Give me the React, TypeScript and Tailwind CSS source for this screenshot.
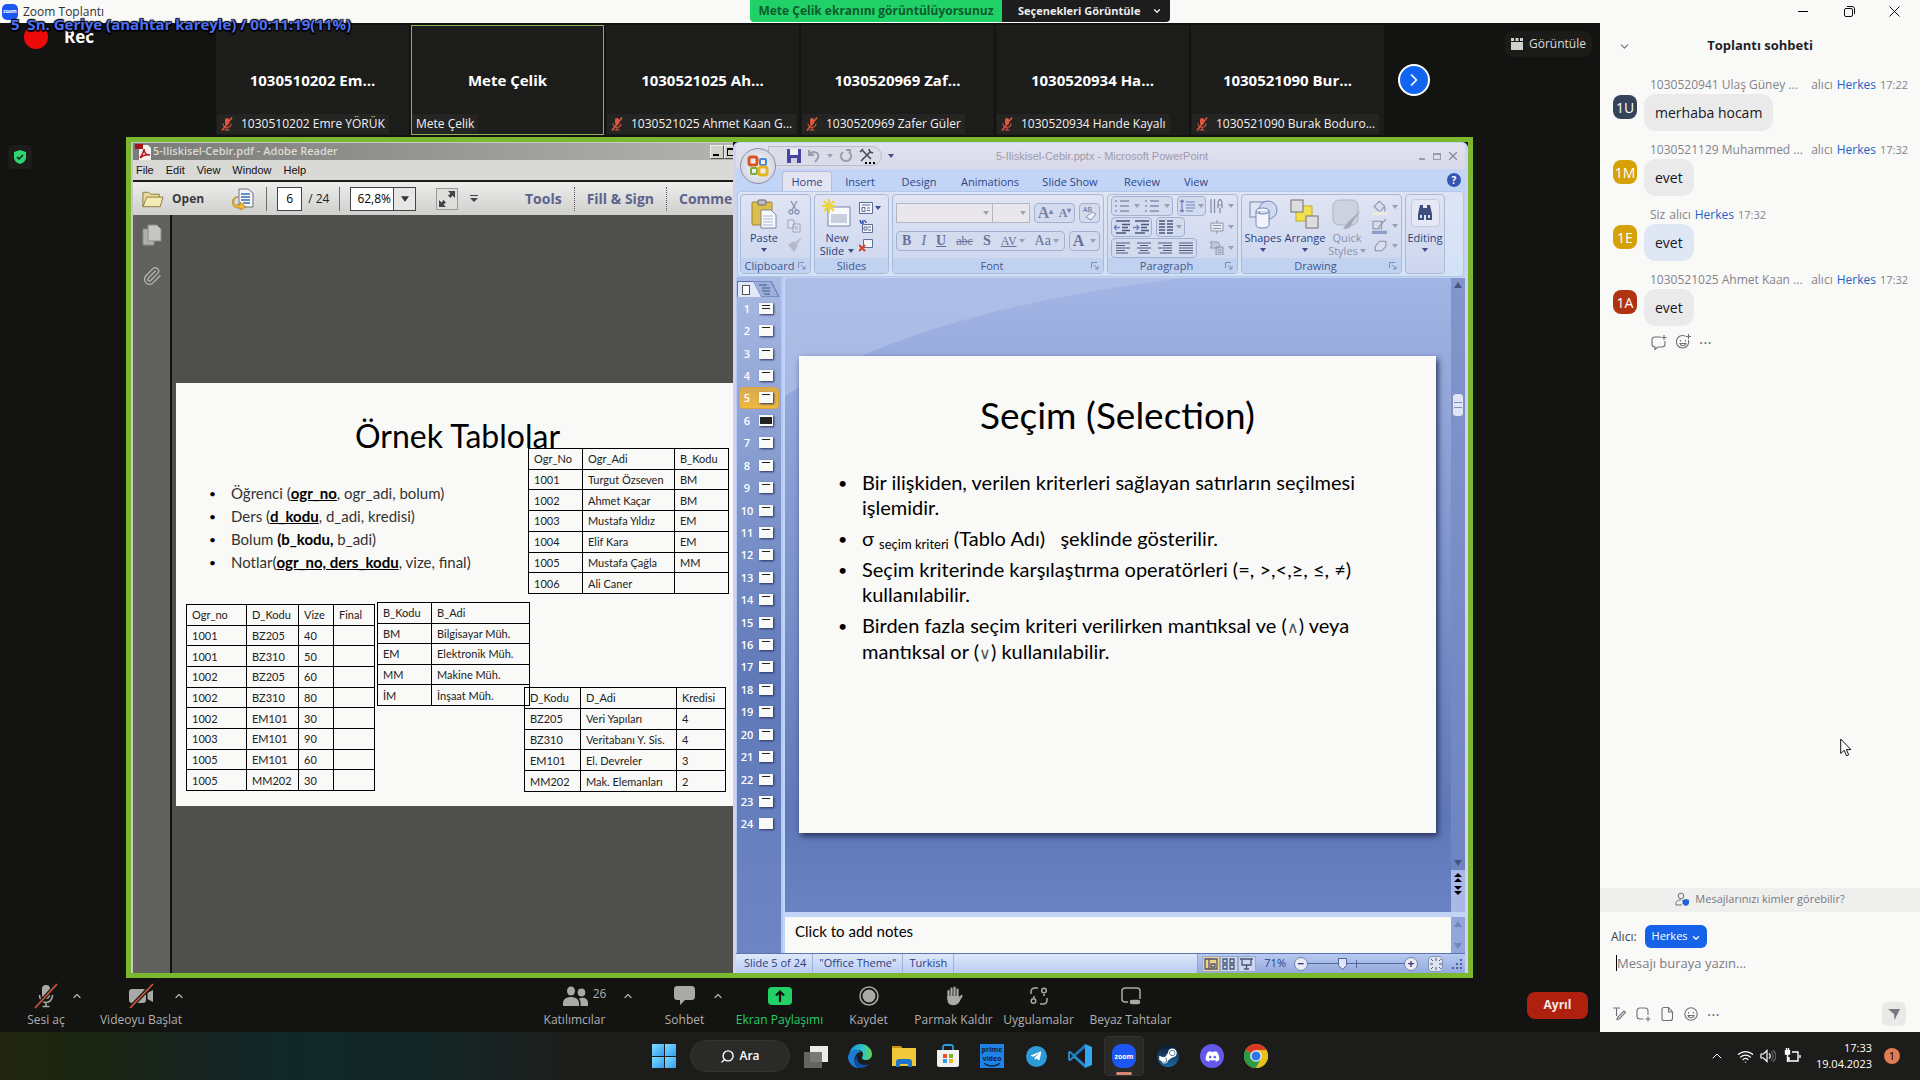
import React from "react";
import { ChevronDown, ChevronUp, ChevronRight, Search, Wifi, Paperclip } from "lucide-react";
import { FaDiscord, FaSteamSymbol, FaTelegramPlane } from "react-icons/fa";

const UI = "font-['Open_Sans','Noto_Sans',sans-serif]";
const SLIDE = "font-['Lato','Open_Sans',sans-serif]";

/* ---------- gallery ---------- */

function MutedMic({ className = "" }: { className?: string }) {
  return (
    <svg viewBox="0 0 12 14" className={"h-3.5 w-3 shrink-0 " + className} fill="none" stroke="#e0573f">
      <rect x="4" y="1" width="4" height="7" rx="2" fill="#e0573f" stroke="none" />
      <path d="M2 6.5c0 5 8 5 8 0M6 10.5V13M3.5 13h5" strokeWidth="1.1" />
      <path d="M11 .5 1 13.5" strokeWidth="1.6" />
    </svg>
  );
}

const people = [
  { big: "1030510202 Em...", small: "1030510202 Emre YÖRÜK", muted: true },
  { big: "Mete Çelik", small: "Mete Çelik", muted: false },
  { big: "1030521025 Ah...", small: "1030521025 Ahmet Kaan G...", muted: true },
  { big: "1030520969 Zaf...", small: "1030520969 Zafer Güler", muted: true },
  { big: "1030520934 Ha...", small: "1030520934 Hande Kayalı", muted: true },
  { big: "1030521090 Bur...", small: "1030521090 Burak Boduro...", muted: true },
];

function Gallery() {
  return (
    <div className="flex h-[114px] items-start pt-[2px]">
      <div className="w-[216px] shrink-0">
        <div className="flex items-center gap-4 pl-6 text-[17px] leading-6 font-bold text-white">
          <span className="h-6 w-6 rounded-full bg-[#ee0a0a]" />
          Rec
        </div>
      </div>
      <div className="flex gap-[2px]">
        {people.map((p) => (
          <div
            key={p.big}
            className={
              "flex h-[110px] w-[193px] flex-col border bg-[#1c1c1b] " +
              (p.muted ? "border-transparent" : "border-[#8fae55]")
            }
          >
            <div className="flex flex-1 items-end justify-center pb-[22px] text-[15px] leading-6 font-bold text-white">
              {p.big}
            </div>
            <div className="flex">
              <span className="flex h-5 items-center gap-1 bg-[#242423] px-1 text-[12px] whitespace-nowrap text-[#f1f1f1]">
                {p.muted && <MutedMic className="mr-1" />}
                {p.small}
              </span>
            </div>
          </div>
        ))}
      </div>
      <button
        aria-label="Sonraki katılımcılar"
        className="mt-[39px] ml-3.5 flex h-8 w-8 items-center justify-center rounded-full border-2 border-white bg-[#1265f0] text-white"
      >
        <ChevronRight size={20} strokeWidth={2} />
      </button>
      <button className="mt-[6px] mr-2 ml-auto flex h-[26px] items-center gap-1.5 rounded-lg bg-[#1b1b1a] px-1.5 text-[12px] text-[#dddddb]">
        <svg viewBox="0 0 12 12" className="h-3 w-3" fill="#cfcfcd">
          <path d="M0 0h3v3H0zM4.500 0h3v3h-3zM9 0h3v3H9zM0 4h12v8H0z" />
        </svg>
        Görüntüle
      </button>
    </div>
  );
}

/* ---------- Adobe Reader window ---------- */

function GridTable({ head, rows, cols, className }: { head: string[]; rows: string[][]; cols: string[]; className: string }) {
  return (
    <table
      className={
        "absolute table-fixed border-collapse text-[11px] leading-none text-[#222] " + className
      }
    >
      <colgroup>
        {cols.map((c, i) => (
          <col key={i} className={c} />
        ))}
      </colgroup>
      <tbody>
        <tr>
          {head.map((h) => (
            <th key={h} scope="col" className="border border-black py-0 pl-[5px] text-left font-normal whitespace-nowrap">
              {h}
            </th>
          ))}
        </tr>
        {rows.map((r, i) => (
          <tr key={i}>
            {r.map((c, j) => (
              <td key={j} className="border border-black py-0 pl-[5px] whitespace-nowrap">
                {c}
              </td>
            ))}
          </tr>
        ))}
      </tbody>
    </table>
  );
}

function PdfPage() {
  return (
    <div className={"relative ml-1 h-[423px] overflow-hidden bg-[#f9f9f7] text-black " + SLIDE}>
      <h2 className="absolute top-[33px] left-[179px] text-[32px] leading-10 whitespace-nowrap">Örnek Tablolar</h2>
      <ul className="absolute top-[99px] left-[33px] text-[15px] leading-[23px] whitespace-nowrap text-[#333]">
        {[
          <>Öğrenci (<b className="text-black underline">ogr_no</b>, ogr_adi, bolum)</>,
          <>Ders (<b className="text-black underline">d_kodu</b>, d_adi, kredisi)</>,
          <>Bolum <b className="text-black">(b_kodu,</b> b_adi)</>,
          <>Notlar(<b className="text-black underline">ogr_no, ders_kodu</b>, vize, final)</>,
        ].map((t, i) => (
          <li key={i} className="flex">
            <span className="w-[22px] text-[12px] text-black">•</span>
            <span>{t}</span>
          </li>
        ))}
      </ul>
      <GridTable
        className="top-[65px] left-[352px] h-[146px] w-[200px]"
        cols={["w-[54px]", "w-[92px]", "w-[54px]"]}
        head={["Ogr_No", "Ogr_Adi", "B_Kodu"]}
        rows={[
          ["1001", "Turgut Özseven", "BM"],
          ["1002", "Ahmet Kaçar", "BM"],
          ["1003", "Mustafa Yıldız", "EM"],
          ["1004", "Elif Kara", "EM"],
          ["1005", "Mustafa Çağla", "MM"],
          ["1006", "Ali Caner", ""],
        ]}
      />
      <GridTable
        className="top-[221px] left-[10px] h-[187px] w-[188px]"
        cols={["w-[60px]", "w-[52px]", "w-[35px]", "w-[41px]"]}
        head={["Ogr_no", "D_Kodu", "Vize", "Final"]}
        rows={[
          ["1001", "BZ205", "40", ""],
          ["1001", "BZ310", "50", ""],
          ["1002", "BZ205", "60", ""],
          ["1002", "BZ310", "80", ""],
          ["1002", "EM101", "30", ""],
          ["1003", "EM101", "90", ""],
          ["1005", "EM101", "60", ""],
          ["1005", "MM202", "30", ""],
        ]}
      />
      <GridTable
        className="top-[219px] left-[201px] h-[104px] w-[152px]"
        cols={["w-[54px]", "w-[98px]"]}
        head={["B_Kodu", "B_Adi"]}
        rows={[
          ["BM", "Bilgisayar Müh."],
          ["EM", "Elektronik Müh."],
          ["MM", "Makine Müh."],
          ["İM", "İnşaat Müh."],
        ]}
      />
      <GridTable
        className="top-[304px] left-[348px] h-[105px] w-[201px]"
        cols={["w-[56px]", "w-[96px]", "w-[49px]"]}
        head={["D_Kodu", "D_Adi", "Kredisi"]}
        rows={[
          ["BZ205", "Veri Yapıları", "4"],
          ["BZ310", "Veritabanı Y. Sis.", "4"],
          ["EM101", "El. Devreler", "3"],
          ["MM202", "Mak. Elemanları", "2"],
        ]}
      />
    </div>
  );
}

const Sep = () => <span className="h-6 w-px bg-[#6d6d6b]" />;

function AdobeReader() {
  return (
    <section className="flex w-[602px] shrink-0 flex-col overflow-hidden border-t border-l-2 border-[#c9c9c4] bg-[#d9d9d6]">
      <div className="flex h-[17px] items-center bg-linear-to-r from-[#7a7a78] to-[#b3b3b0] pl-0.5">
        <svg viewBox="0 0 16 16" className="mr-0.5 h-4 w-4">
          <path d="M4 1h9l3 3v12H4z" fill="#f4f0ee" />
          <path d="M0 0h8v5H0z" fill="#a51417" />
          <path d="M5 14c2-3 4-6 4-9 0 3 2 6 6 6-4-1-7 0-10 3z" fill="none" stroke="#b31217" strokeWidth="1.5" />
        </svg>
        <span className="text-[11px] font-semibold text-[#dcdad2]">5-Iliskisel-Cebir.pdf - Adobe Reader</span>
        <button aria-label="Minimize" className="ml-auto flex h-3.5 w-3.5 items-end justify-start border border-[#eee] border-r-[#555] border-b-[#555] bg-[#d4d1c9] p-0.5">
          <span className="h-0.5 w-1.5 bg-black" />
        </button>
        <button aria-label="Maximize" className="flex h-3.5 w-[9px] items-center border border-r-0 border-[#eee] border-b-[#555] bg-[#d4d1c9] pl-0.5">
          <span className="h-2 w-2 border border-t-2 border-r-0 border-black" />
        </button>
      </div>
      <nav className="flex h-5 items-center gap-3 pl-[3px] font-['Liberation_Sans',sans-serif] text-[11px] text-[#111]">
        {["File", "Edit", "View", "Window", "Help"].map((m) => (
          <button key={m}>{m}</button>
        ))}
      </nav>
      <div className="flex h-[35px] items-center border-t-2 border-[#1c1c1c] bg-linear-to-b from-[#ededec] to-[#cfcfcd] pl-2">
        <button className="flex items-center gap-2 text-[12px] font-bold text-[#3b3b3b]">
          <svg viewBox="0 0 24 20" className="h-5 w-[23px]">
            <path d="M2 18V3h6l2 2h9v3" fill="#e9dca0" stroke="#8b7a3c" />
            <path d="M2 18 6 8h17l-3 10z" fill="#f4ebb5" stroke="#8b7a3c" />
          </svg>
          Open
        </button>
        <span className="ml-4"><Sep /></span>
        <button aria-label="Convert" className="mx-3">
          <svg viewBox="0 0 22 22" className="h-[22px] w-[22px]">
            <path d="M7 1h9l5 4v14H7z" fill="#f3f5f8" stroke="#66727f" />
            <path d="M9 6h9M9 9h9M9 12h9M11 15h7" stroke="#3a70b0" strokeWidth="1.3" />
            <path d="M6 9C1 10 0 16 5 17h3v-3l6 5-6 3v-2H5C-2 19-1 8 6 9z" fill="#f0b93c" stroke="#a77812" strokeWidth=".7" />
          </svg>
        </button>
        <Sep />
        <input aria-label="Page" defaultValue="6" className="ml-2.5 h-6 w-[25px] border border-[#444] bg-white text-center text-[12px] text-black" />
        <span className="mr-2.5 ml-1.5 text-[12px] whitespace-nowrap text-[#222]">/ 24</span>
        <Sep />
        <span className="relative ml-2.5 flex h-6 w-[66px] border border-[#444] bg-white">
          <select aria-label="Zoom" className="w-full appearance-none bg-transparent pl-1.5 text-[12px] text-black">
            <option>62,8%</option>
          </select>
          <span className="pointer-events-none absolute inset-y-0 right-0 flex w-[22px] items-center justify-center border-l border-[#444] bg-[#e6e6e4]">
            <svg viewBox="0 0 6 4" className="h-1.5 w-2" fill="#333"><path d="M0 0h6L3 4z" /></svg>
          </span>
        </span>
        <span className="ml-2"><Sep /></span>
        <button aria-label="Fit" className="ml-3 flex h-[22px] w-[22px] items-center justify-center border border-[#9a9a98] bg-[#dededc]">
          <svg viewBox="0 0 18 18" className="h-[18px] w-[18px]" fill="#444">
            <path d="M10 1h7v7l-2.500-2.500L12.500 8 10 5.500l2.500-2zM8 17H1v-7l2.500 2.500L5.500 10 8 12.500l-2.500 2z" />
          </svg>
        </button>
        <button aria-label="More tools" className="ml-3">
          <svg viewBox="0 0 8 8" className="h-2 w-2" fill="#444"><path d="M0 0h8v1H0zM0 3h8L4 7z" /></svg>
        </button>
        <div className="ml-auto flex items-center text-[14px] font-bold text-[#5d638c]">
          <button className="pr-3">Tools</button>
          <span className="h-6 border-l border-dotted border-[#555]" />
          <button className="px-3 whitespace-nowrap">Fill &amp; Sign</button>
          <span className="h-6 border-l border-dotted border-[#555]" />
          <button className="w-[66px] overflow-hidden pl-3 text-left">Comment</button>
        </div>
      </div>
      <div className="flex flex-1">
        <div className="flex w-[39px] flex-col items-center gap-5 border-r-2 border-[#111] bg-[#60605e] pt-[9px]">
          <button aria-label="Pages">
            <svg viewBox="0 0 20 22" className="h-[22px] w-5" fill="#b0b0ae" stroke="#8a8a88">
              <path d="M1 5h11v16H1z" />
              <path d="M6 1h9l4 4v12H6z" fill="#c6c6c4" />
            </svg>
          </button>
          <button aria-label="Attachments" className="text-[#b8b8b6]">
            <Paperclip size={20} strokeWidth={1.500} />
          </button>
        </div>
        <div className="flex-1 overflow-hidden bg-[#4f4f4c] pt-[168px]">
          <PdfPage />
        </div>
      </div>
    </section>
  );
}

/* ---------- PowerPoint window ---------- */

const Caret = ({ dim = false }: { dim?: boolean }) => (
  <svg viewBox="0 0 6 4" className={"h-1 w-1.5 shrink-0 " + (dim ? "fill-[#9a9fb4]" : "fill-[#3b4f8a]")}>
    <path d="M0 0h6L3 4z" />
  </svg>
);

function Group({ label, className, children, launcher = true }: { label: string; className: string; children: React.ReactNode; launcher?: boolean }) {
  return (
    <div className={"flex h-20 flex-col overflow-hidden rounded border border-[#a9b9d8] bg-linear-to-b from-[#e0e4f3] to-[#ccd6ef] " + className}>
      <div className="flex flex-1">{children}</div>
      {label && (
        <div className="flex h-[15px] items-center justify-center bg-[#c0d2f0] text-[11px] leading-none text-[#44588f]">
          <span className="flex-1 text-center">{label}</span>
          {launcher && (
            <svg viewBox="0 0 8 8" className="mr-1 h-2 w-2" fill="none" stroke="#7d8cb5">
              <path d="M.5 6V.5H6M3 3l4 4M7 4v3H4" />
            </svg>
          )}
        </div>
      )}
    </div>
  );
}

const Lines = ({ d, color = "#4c587c" }: { d: string; color?: string }) => (
  <svg viewBox="0 0 14 14" className="h-3.5 w-3.5" stroke={color} strokeWidth="1.200">
    <path d={d} />
  </svg>
);

const ListIcon = () => (
  <svg viewBox="0 0 14 14" className="h-3.5 w-3.5" stroke="#8890b0" strokeWidth="1.3">
    <path d="M0 2h2M0 7h2M0 12h2M5 2h9M5 7h9M5 12h9" />
  </svg>
);

const IndentIcon = ({ flip = false }: { flip?: boolean }) => (
  <svg viewBox="0 0 16 14" className="h-3.5 w-4" stroke="#4c587c" strokeWidth="1.3" fill="none">
    <path d="M2 1h14M8 4.500h8M8 7.500h6M8 10.500h8M2 13h10" />
    <path d={flip ? "M0 7.500h6M3.500 5 6 7.500 3.500 10" : "M6 7.500H0M2.500 5 0 7.500 2.500 10"} stroke="#6c82c4" />
  </svg>
);

const boxed = "flex items-center justify-around rounded-sm border border-[#a3b1d0] bg-[#d3dbef]";

function Ribbon() {
  return (
    <div className="mx-px flex h-[86px] gap-[3px] rounded border border-[#b5c6e8] bg-linear-to-b from-[#dfe4f4] to-[#d2e2f6] px-[2px] pt-[2px] text-[11px] leading-3 text-[#2b3f80]">
      <Group label="Clipboard" className="w-[71px]">
        <button className="flex w-[46px] flex-col items-center pt-1">
          <svg viewBox="0 0 26 30" className="h-[30px] w-[26px]">
            <rect x="1" y="3" width="20" height="23" rx="1" fill="#dbbf4c" stroke="#9b8430" />
            <rect x="7" y="1" width="8" height="5" rx="1" fill="#b9bdc8" stroke="#666" />
            <path d="M10 11h10l5 5v13H10z" fill="#fafbfd" stroke="#7b87a6" />
            <path d="M12 17h10M12 20h10M12 23h10M12 26h10" stroke="#a4b3d3" />
          </svg>
          <span className="mt-[3px]">Paste</span>
          <span className="mt-1"><Caret /></span>
        </button>
        <div className="flex flex-col items-center justify-around py-1">
          <svg viewBox="0 0 12 14" className="h-3.5 w-3" fill="none" stroke="#8a93b8" strokeWidth="1.300">
            <path d="M3 0l5 9M9 0 4 9" />
            <circle cx="3" cy="11" r="2" />
            <circle cx="9" cy="11" r="2" />
          </svg>
          <svg viewBox="0 0 14 14" className="h-3.5 w-3.5" fill="#e3e6f0" stroke="#9aa2bf">
            <path d="M1 1h6v8H1zM6 5h7v8H6zM8 8h3M8 10h3" />
          </svg>
          <svg viewBox="0 0 14 14" className="h-3.5 w-3.5" fill="#b5b9c8">
            <path d="m9 4 4-4 1 1-4 5zM1 7l6-4 4 4-4 7z" />
          </svg>
        </div>
      </Group>
      <Group label="Slides" launcher={false} className="w-[75px]">
        <button className="flex w-11 flex-col items-center pt-1">
          <svg viewBox="0 0 30 30" className="h-[30px] w-[30px]">
            <rect x="6" y="8" width="22" height="19" fill="#f8f9fc" stroke="#7684ab" />
            <path d="M9 15h16v9H9z" fill="#c9cfdd" />
            <path d="M7 0v14M0 7h14M2 2l10 10M12 2 2 12" stroke="#ecd33c" strokeWidth="2" />
          </svg>
          <span className="mt-[3px]">New</span>
          <span className="mt-px flex items-center gap-1">Slide <Caret /></span>
        </button>
        <div className="flex flex-col items-start justify-around py-1">
          <span className="flex items-center gap-0.5">
            <svg viewBox="0 0 14 14" className="h-3.5 w-3.5" fill="#f4f6fb" stroke="#5f6c93">
              <path d="M.5 1.500h13v11H.5zM3 4h8M3 6.500h3v4H3zM8 7h3M8 9.500h3" />
            </svg>
            <Caret />
          </span>
          <svg viewBox="0 0 14 14" className="h-3.5 w-3.5" fill="#f4f6fb" stroke="#5f6c93">
            <path d="M3.500 5.500h10v8h-10zM5 8h3v3H5zM9 8h3M9 11h3" />
            <path d="M7 4C7 1 4 1 3 3M1 1l1 3h3" stroke="#2f52b5" strokeWidth="1.400" fill="none" />
          </svg>
          <svg viewBox="0 0 14 14" className="h-3.5 w-3.5" fill="#f4f6fb" stroke="#5f6c93">
            <path d="M4.500 1.500h9v8h-9z" />
            <path d="m0 7 6 6M6 7l-6 6" stroke="#d2421f" strokeWidth="2" />
          </svg>
        </div>
      </Group>
      <Group label="Font" className="w-[212px]">
        <div className="flex flex-1 flex-col gap-2 px-[3px] pt-2 text-[#7782a5]">
          <div className="flex h-5 gap-1">
            <div className="flex">
              <span className="relative flex">
                <select aria-label="Font" className="w-[97px] appearance-none border border-[#b3b6c4] bg-[#e9e7ec]" />
                <span className="pointer-events-none absolute top-[8px] right-1 flex"><Caret dim /></span>
              </span>
              <span className="relative flex">
                <select aria-label="Font size" className="w-[37px] appearance-none border border-l-0 border-[#b3b6c4] bg-[#e9e7ec]" />
                <span className="pointer-events-none absolute top-[8px] right-1 flex"><Caret dim /></span>
              </span>
            </div>
            <div className={boxed + " w-[41px] font-['Liberation_Serif',serif] font-bold"}>
              <span className="text-[16px]">A<sup className="text-[8px]">▴</sup></span>
              <span className="text-[12px]">A<sup className="text-[8px]">▾</sup></span>
            </div>
            <div className={boxed + " flex-1"}>
              <svg viewBox="0 0 16 16" className="h-4 w-4" fill="#eceef5" stroke="#8a92ae">
                <text x="1" y="7" fontSize="7" fill="#5c678c" stroke="none">AB</text>
                <path d="m4 12 6-5 4 2-5 6z" />
              </svg>
            </div>
          </div>
          <div className="flex h-5 gap-1 font-['Liberation_Serif',serif] text-[14px] leading-4 text-[#66719a]">
            <div className={boxed + " w-[169px]"}>
              <b>B</b>
              <i>I</i>
              <u className="font-bold">U</u>
              <s className="text-[12px]">abc</s>
              <b>S</b>
              <span className="flex items-center gap-0.5 text-[12px] underline">AV <Caret dim /></span>
              <span className="flex items-center gap-0.5">Aa <Caret dim /></span>
            </div>
            <div className={boxed + " flex-1"}>
              <b className="text-[16px]">A</b>
              <Caret dim />
            </div>
          </div>
        </div>
      </Group>
      <Group label="Paragraph" className="w-[131px]">
        <div className="flex flex-1 justify-between px-[3px] pt-px">
          <div className="flex flex-col gap-px">
            <div className="flex h-5 gap-1">
              <div className={boxed + " w-[62px]"}><ListIcon /><Caret dim /><ListIcon /><Caret dim /></div>
              <div className={boxed + " w-[29px]"}>
                <svg viewBox="0 0 16 14" className="h-3.5 w-4" fill="none" stroke="#6d7fb8" strokeWidth="1.200">
                  <path d="M3 1v12M1 3l2-2 2 2M1 11l2 2 2-2M7 3h9M7 6h9M7 9h9M7 12h7" />
                </svg>
                <Caret dim />
              </div>
            </div>
            <div className="flex h-5 gap-1">
              <div className={boxed + " w-[41px]"}><IndentIcon /><IndentIcon flip /></div>
              <div className={boxed + " w-[29px]"}>
                <svg viewBox="0 0 14 14" className="h-3.5 w-3.5" stroke="#4c587c" strokeWidth="1.300">
                  <path d="M0 1h6M0 4h6M0 7h6M0 10h6M0 13h6M8 1h6M8 4h6M8 7h6M8 10h6M8 13h6" />
                </svg>
                <Caret dim />
              </div>
            </div>
            <div className="flex h-5">
              <div className={boxed + " w-[86px]"}>
                <Lines d="M0 2h14M0 4.500h9M0 7h14M0 9.500h9M0 12h12" />
                <Lines d="M0 2h14M3 4.500h8M0 7h14M3 9.500h8M1 12h12" />
                <Lines d="M0 2h14M5 4.500h9M0 7h14M5 9.500h9M2 12h12" />
                <Lines d="M0 2h14M0 4.500h14M0 7h14M0 9.500h14M0 12h14" />
              </div>
            </div>
          </div>
          <div className="flex flex-col justify-around">
            <span className="flex items-center gap-1">
              <svg viewBox="0 0 14 14" className="h-3.5 w-3.5" fill="none" stroke="#8089a6" strokeWidth="1.200">
                <path d="M1 0v14M4.500 0v14M8 9V3l2-3 2 3v6M8 6h4M10 9v5" />
              </svg>
              <Caret dim />
            </span>
            <span className="flex items-center gap-1">
              <svg viewBox="0 0 14 14" className="h-3.5 w-3.5" fill="#e9ebf3" stroke="#8f96af">
                <path d="M1 3h12v8H1zM3 5.500h8M3 8.500h8M7 0v3M7 11v3" />
              </svg>
              <Caret dim />
            </span>
            <span className="flex items-center gap-1">
              <svg viewBox="0 0 14 14" className="h-3.5 w-3.5" fill="#c5c9d6" stroke="#8f96af">
                <path d="M0 1h8l2 3-2 3H0l2-3zM6 6h7v8H6zM8 9h3M8 11.500h3" />
              </svg>
              <Caret dim />
            </span>
          </div>
        </div>
      </Group>
      <Group label="Drawing" className="w-[161px]">
        <button className="flex w-[42px] flex-col items-center pt-1">
          <svg viewBox="0 0 30 30" className="h-[30px] w-[30px]" fill="#f1f4fb" stroke="#7387b9">
            <rect x="2" y="3" width="17" height="15" fill="#dfe5f3" />
            <circle cx="20" cy="11" r="9" fill="#cfd9ef" />
            <path d="M8 12c0-4 13-4 13 0v14c0 4-13 4-13 0zM8 12c0 4 13 4 13 0" />
          </svg>
          <span className="mt-[3px]">Shapes</span>
          <span className="mt-1"><Caret /></span>
        </button>
        <button className="flex w-[42px] flex-col items-center pt-1">
          <svg viewBox="0 0 30 30" className="h-[30px] w-[30px]" stroke="#6f7173">
            <rect x="6" y="7" width="16" height="15" fill="#f0e04e" stroke="#bfae2c" />
            <rect x="1" y="1" width="12" height="12" fill="#dddde0" />
            <rect x="16" y="17" width="12" height="12" fill="#dddde0" />
          </svg>
          <span className="mt-[3px]">Arrange</span>
          <span className="mt-1"><Caret /></span>
        </button>
        <button className="flex w-[42px] flex-col items-center pt-1 text-[#8d93a8]">
          <svg viewBox="0 0 30 30" className="h-[30px] w-[30px]">
            <rect x="1" y="1" width="25" height="25" rx="6" fill="#ccd2e0" stroke="#adb5c9" />
            <path d="M29 11 17 22l-6 8c5 0 9-2 9-6z" fill="#a5abbd" />
          </svg>
          <span className="mt-[3px]">Quick</span>
          <span className="mt-px flex items-center gap-0.5">Styles <Caret dim /></span>
        </button>
        <div className="flex flex-1 flex-col items-center justify-around py-0.5">
          {["m2 7 5-5 5 5-5 5zM12 8v5", "M1 3h8v7H1zM13 1 6 9", "m3 8 4-5h6v5l-4 4H3z"].map((d, i) => (
            <span key={d} className="flex items-center gap-1">
              <svg viewBox="0 0 15 15" className="h-4 w-4" fill="#dadeea" stroke="#8b92ab">
                <path d={d} />
                {i < 2 && <path d="M0 13.500h14" stroke={i ? "#8d9cc8" : "#eeeae0"} strokeWidth="3" />}
              </svg>
              <Caret dim />
            </span>
          ))}
        </div>
      </Group>
      <Group label="" className="w-[40px]">
        <button className="flex w-full flex-col items-center pt-1">
          <span className="flex h-7 w-[29px] items-center justify-center rounded border border-[#c3cbe0] bg-[#e6e9f5]">
            <svg viewBox="0 0 16 16" className="h-4 w-4" fill="#3d4d80">
              <path d="M3 0h3v3h4V0h3l2 9v6H9v-5H7v5H1V9z" />
              <path d="M3 10h2v3H3zM11 10h2v3h-2z" fill="#dfe4f4" />
            </svg>
          </span>
          <span className="mt-[5px]">Editing</span>
          <span className="mt-1"><Caret /></span>
        </button>
      </Group>
    </div>
  );
}

function ThumbList() {
  return (
    <div className="flex w-[47px] shrink-0 flex-col border-r-2 border-l border-[#b7c9f3] bg-linear-to-b from-[#a9bae3] via-[#5f79b8] via-60% to-[#6d85c4]">
      <div className="flex h-5 items-end">
        <button aria-label="Slides" className="flex h-4 w-4 items-center justify-center border-t border-l border-[#5a6fa8] bg-[#dfe7f8]">
          <span className="h-2.5 w-2 border border-[#555] bg-white" />
        </button>
        <svg viewBox="0 0 26 16" className="h-4 w-[26px]">
          <path d="M0 0 8 16h18L18 0z" fill="#9db0dd" stroke="#5a6fa8" />
          <path d="M0 0v16h8z" fill="#dfe7f8" />
          <path d="M6 4h8M9 7h8M9 10h8M11 13h6" stroke="#46547f" />
        </svg>
      </div>
      <ol className="flex h-[538px] flex-col">
        {Array.from({ length: 24 }, (_, i) => (
          <li
            key={i}
            className={
              "mx-[2px] flex flex-1 items-center rounded-sm border text-[11px] leading-none font-semibold text-white " +
              (i === 4 ? "border-[#dca23c] bg-linear-to-b from-[#d8ab50] to-[#f0b83e]" : "border-transparent")
            }
          >
            <span className="w-3.5 text-center">{i + 1}</span>
            <span className="ml-[5px] flex h-[11px] w-3.5 justify-center bg-[#f9f9f7] pt-0.5 shadow-[1px_1px_2px_#26315a]">
              {i < 23 && <span className={i === 5 ? "h-[7px] w-3 bg-[#222]" : i === 0 ? "h-1 w-2 border-y border-[#222]" : "h-px w-2 bg-[#222]"} />}
            </span>
          </li>
        ))}
      </ol>
    </div>
  );
}

function SlideContent() {
  return (
    <div className={"mt-[78px] ml-[14px] h-[477px] w-[637px] bg-[#f9f9f7] pt-[35px] text-black shadow-[2px_3px_6px_#26315a] " + SLIDE}>
      <h1 className="text-center text-[37px] leading-[48px]">Seçim (Selection)</h1>
      <ul className="mt-[31px] ml-[39px] flex flex-col gap-[6px] text-[20px] leading-[25px] whitespace-nowrap">
        {[
          <>Bir ilişkiden, verilen kriterleri sağlayan satırların seçilmesi<br />işlemidir.</>,
          <>σ <sub className="text-[13px] leading-none">seçim kriteri</sub> (Tablo Adı)&nbsp;&nbsp; şeklinde gösterilir.</>,
          <>Seçim kriterinde karşılaştırma operatörleri (=, &gt;,&lt;,≥, ≤, ≠)<br />kullanılabilir.</>,
          <>Birden fazla seçim kriteri verilirken mantıksal ve (<span className="text-[16px] text-[#555]">∧</span>) veya<br />mantıksal or (<span className="text-[16px] text-[#555]">∨</span>) kullanılabilir.</>,
        ].map((t, i) => (
          <li key={i} className="flex">
            <span className="w-6 text-[16px]">•</span>
            <span>{t}</span>
          </li>
        ))}
      </ul>
    </div>
  );
}

function StatusBar() {
  const cell = "flex h-full items-center border-r border-[#9db3dc] px-1.5";
  return (
    <div className="flex h-5 items-center border-t border-[#5c76b4] bg-linear-to-b from-[#dfe8fa] to-[#b9ccf2] pl-[2px] text-[11px] text-[#2b3f80]">
      <span className={cell}>Slide 5 of 24</span>
      <span className={cell}>&quot;Office Theme&quot;</span>
      <span className={cell}>Turkish</span>
      <div className="ml-auto flex h-full items-center border-l border-[#8ba2d4] bg-linear-to-b from-[#b9caf0] to-[#93aadf] pl-1">
        <div className="flex h-4 text-[#4a5575]">
          {["M1 1h12v10H1zM5 1v10M7 6h4v3H7z", "M1 1h4v4H1zM8 1h4v4H8zM1 7h4v4H1zM8 7h4v4H8z", "M0 1h13M2 1v6h9V1M6.500 7v4M4 11h5"].map((d, i) => (
            <button key={d} aria-label={"View " + (i + 1)} className={"flex w-[18px] items-center justify-center border border-[#9aa9cc] " + (i === 0 ? "bg-[#f2d28a]" : "bg-[#ccd6ee]")}>
              <svg viewBox="0 0 14 12" className="h-3 w-3.5" fill="none" stroke="currentColor" strokeWidth="1.300"><path d={d} /></svg>
            </button>
          ))}
        </div>
        <span className="mr-2 ml-2">71%</span>
        <button aria-label="Zoom out" className="flex h-3.5 w-3.5 items-center justify-center rounded-full border border-[#6f7fa9] bg-[#e8ecf7] text-[12px] leading-none font-bold">−</button>
        <span className="relative flex h-3 w-24 items-center">
          <span className="h-px w-full bg-[#55659a]" />
          <svg viewBox="0 0 9 12" className="absolute left-[30px] h-3 w-[9px]" fill="#dfe5f5" stroke="#55659a"><path d="M.5.5h8v7l-4 4-4-4z" /></svg>
          <span className="absolute left-[48px] h-2 w-px bg-[#55659a]" />
        </span>
        <button aria-label="Zoom in" className="flex h-3.5 w-3.5 items-center justify-center rounded-full border border-[#6f7fa9] bg-[#e8ecf7] text-[12px] leading-none font-bold">+</button>
        <button aria-label="Fit slide" className="ml-2.5 flex h-4 w-[15px] items-center justify-center rounded-sm border border-[#8793b5] bg-[#dfe4f2]">
          <svg viewBox="0 0 12 12" className="h-3 w-3" fill="none" stroke="#4a5575"><path d="M6 0v3M6 9v3M0 6h3M9 6h3M1 1l2 2M11 1 9 3M1 11l2-2M11 11 9 9" /></svg>
        </button>
        <svg viewBox="0 0 12 12" className="mr-0.5 ml-2 h-3 w-3" fill="#4d5f9b">
          <path d="M9 1h2v2H9zM9 5h2v2H9zM9 9h2v2H9zM5 5h2v2H5zM5 9h2v2H5zM1 9h2v2H1z" />
        </svg>
      </div>
    </div>
  );
}

function PowerPoint() {
  return (
    <section className="flex min-w-0 flex-1 flex-col overflow-hidden rounded-t-md border-x-[3px] border-[#cfd2f0] bg-[#c3d5f7] pt-px">
      <div className="relative flex h-[26px] items-center bg-linear-to-b from-[#e2e1ef] to-[#dad9ea]">
        <div className="ml-8 flex h-5 w-[114px] items-center gap-1.5 rounded-r-full border border-[#b9bacb] bg-[#dcdce9] pl-[18px]">
          <svg viewBox="0 0 14 14" className="h-3.5 w-3.5 shrink-0"><path d="M0 0h14v14H0z" fill="#4747a0" /><path d="M3 0h8v6H3z" fill="#f1f1f8" /><path d="M4 9h6v5H4z" fill="#cfcfe4" /></svg>
          <svg viewBox="0 0 14 14" className="h-3.5 w-3.5 shrink-0" fill="none" stroke="#9a9cb2" strokeWidth="2"><path d="M2 1v5h5M2 6c4-5 11-3 9 3l-3 4" /></svg>
          <Caret dim />
          <svg viewBox="0 0 14 14" className="h-3.5 w-3.5 shrink-0" fill="none" stroke="#9a9cb2" strokeWidth="2"><path d="M4 3C0 6 2 12 7 12s7-6 3-9M7 1h4v4" /></svg>
          <svg viewBox="0 0 16 16" className="h-4 w-4 shrink-0" fill="none" stroke="#4a4a55" strokeWidth="1.600"><path d="m2 13 9-9M10 1l1 3 3 1M3 2l9 9M1 4l3-3" /><path d="M6 15h2M10 15h2M14 15h2" stroke="#000" strokeWidth="2" /></svg>
        </div>
        <span className="ml-1.5"><Caret /></span>
        <span className="absolute left-[260px] font-['Liberation_Sans',sans-serif] text-[11px] whitespace-nowrap text-[#9c9cab]">5-Iliskisel-Cebir.pptx - Microsoft PowerPoint</span>
        <div className="mr-2 ml-auto flex items-center gap-2 text-[#8a8a9a]">
          <button aria-label="Minimize" className="h-[7px] w-1.5 border-b-2 border-[#9a9aac]" />
          <button aria-label="Restore" className="h-[7px] w-2 border border-t-2 border-[#9a9aac]" />
          <button aria-label="Close">
            <svg viewBox="0 0 8 8" className="h-2 w-2" stroke="#8a8a9a" strokeWidth="1.300"><path d="m0 0 8 8M8 0 0 8" /></svg>
          </button>
        </div>
        <button aria-label="Office" className="absolute top-[5px] left-[4px] z-10 flex h-9 w-9 items-center justify-center rounded-full border border-[#8b8fa6] bg-radial from-[#fbfbfd] to-[#c5c8d8]">
          <svg viewBox="0 0 22 22" className="h-[22px] w-[22px]" fill="none" strokeWidth="3">
            <rect x="2" y="2" width="8" height="8" rx="2" stroke="#d9541e" />
            <rect x="13" y="4" width="6" height="6" rx="1" stroke="#4a86d2" strokeWidth="2" />
            <rect x="4" y="13" width="6" height="6" rx="1" stroke="#79ad3a" strokeWidth="2" />
            <rect x="12" y="12" width="8" height="8" rx="2" stroke="#e9b422" />
          </svg>
        </button>
      </div>
      <div className="flex h-[22px] items-end bg-[#c3d5f7] pl-[46px] text-[11px] leading-none text-[#2f4689]">
        {[
          ["Home", "w-[50px]"], ["Insert", "w-[56px]"], ["Design", "w-[62px]"], ["Animations", "w-[80px]"],
          ["Slide Show", "w-[80px]"], ["Review", "w-[64px]"], ["View", "w-[44px]"],
        ].map(([t, w], i) => (
          <button key={t} className={"h-5 " + w + (i === 0 ? " rounded-t border border-b-0 border-[#b8bdd6] bg-[#e4e5f2]" : "")}>{t}</button>
        ))}
        <button aria-label="Help" className="mr-1 mb-1 ml-auto flex h-3.5 w-3.5 items-center justify-center rounded-full bg-[#3556b0] text-[10px] font-bold text-white">?</button>
      </div>
      <Ribbon />
      <div className="flex min-h-0 flex-1">
        <ThumbList />
        <div className="flex min-w-0 flex-1 flex-col pt-px pl-[2px]">
          <div className="flex min-h-0 flex-1">
            <div className="relative min-w-0 flex-1 overflow-hidden bg-linear-to-b from-[#a3b5e4] via-[#5f78b8] via-85% to-[#6a83c3]">
              <svg viewBox="0 0 400 120" className="absolute top-0 left-0 h-[120px] w-[400px]" fill="#b5c5ea" fillOpacity=".6">
                <path d="M0 0h400C230 20 90 60 0 118z" />
              </svg>
              <div className="relative"><SlideContent /></div>
            </div>
            <div className="flex w-[14px] flex-col items-center bg-linear-to-b from-[#8296cd] to-[#6d83c0]">
              <svg viewBox="0 0 8 6" className="mt-1 h-1.5 w-2" fill="#46547f"><path d="M0 6h8L4 0z" /></svg>
              <div className="mt-[105px] flex h-6 w-3 items-center justify-center rounded-sm border border-[#7d8fbd] bg-[#dfe5f6]">
                <span className="h-1.5 w-2 border-y border-[#7d8fbd]" />
              </div>
              <svg viewBox="0 0 8 6" className="mt-auto mb-1 h-1.5 w-2" fill="#46547f"><path d="M0 0h8L4 6z" /></svg>
              <div className="flex h-[42px] w-full flex-col items-center pt-0.5 gap-1 bg-[#a8b9e8]">
                <svg viewBox="0 0 8 10" className="h-2.5 w-2"><path d="M0 5h8L4 1zM0 10h8L4 6z" /></svg>
                <svg viewBox="0 0 8 10" className="h-2.5 w-2"><path d="M0 0h8L4 4zM0 5h8L4 9z" /></svg>
              </div>
            </div>
          </div>
          <div className="mt-[5px] flex h-9">
            <textarea aria-label="Notes" placeholder="Click to add notes" className={"h-full flex-1 resize-none bg-[#f9f9f7] px-2.5 pt-1 text-[15px] leading-5 text-black placeholder:text-black " + SLIDE} />
            <div className="flex w-[14px] flex-col items-center justify-between bg-[#93a6da] py-1">
              <svg viewBox="0 0 8 6" className="h-1.5 w-2" fill="#7384b8"><path d="M0 6h8L4 0z" /></svg>
              <svg viewBox="0 0 8 6" className="h-1.5 w-2" fill="#7384b8"><path d="M0 0h8L4 6z" /></svg>
            </div>
          </div>
        </div>
      </div>
      <StatusBar />
    </section>
  );
}

/* ---------- meeting toolbar ---------- */

function Tool({ label, className, children, green = false }: { label: string; className: string; children: React.ReactNode; green?: boolean }) {
  return (
    <button className={"flex shrink-0 flex-col items-center text-[12px] leading-4 whitespace-nowrap " + className + (green ? " text-[#22d167]" : " text-[#b0b0ae]")}>
      <span className="mb-0.5 flex h-7 items-center gap-1">{children}</span>
      {label}
    </button>
  );
}

const Up = ({ label }: { label: string }) => (
  <button aria-label={label} className="mb-[18px] flex w-3.5 justify-center text-[#b0b0ae]">
    <ChevronUp size={12} strokeWidth={2.500} />
  </button>
);

function Toolbar() {
  return (
    <div className="flex h-[54px] items-center">
      <Tool label="Sesi aç" className="ml-[22px] w-12">
        <svg viewBox="0 0 24 26" className="h-[26px] w-6" fill="none" stroke="#a9a9a7">
          <rect x="8" y="2" width="8" height="14" rx="4" fill="#a9a9a7" stroke="none" />
          <path d="M5.500 12c0 10 13 10 13 0M12 19v4M8.500 23.500h7" strokeWidth="1.600" />
          <path d="M23 1 1 25" stroke="#1a1a19" strokeWidth="4" />
          <path d="M23 1 1 25" stroke="#d4543d" strokeWidth="1.600" />
        </svg>
      </Tool>
      <Up label="Ses ayarları" />
      <Tool label="Videoyu Başlat" className="ml-2.5 w-[94px]">
        <svg viewBox="0 0 26 26" className="h-[26px] w-[26px]" fill="#a9a9a7">
          <rect x="1" y="6" width="17" height="14" rx="3" />
          <path d="m19.500 10 5.500-3v12l-5.500-3z" />
          <path d="M25 1 2 25" stroke="#1a1a19" strokeWidth="4" />
          <path d="M25 1 2 25" stroke="#d4543d" strokeWidth="1.600" />
        </svg>
      </Tool>
      <span className="-ml-4"><Up label="Video ayarları" /></span>
      <div className="mx-auto flex items-center pr-2">
        <Tool label="Katılımcılar" className="w-[92px]">
          <svg viewBox="0 0 26 20" className="ml-5 h-5 w-[26px]" fill="#a9a9a7">
            <ellipse cx="8" cy="5" rx="4" ry="4.500" />
            <ellipse cx="18.500" cy="6.500" rx="3.800" ry="4" />
            <path d="M0 20v-3c0-8 16-8 16 0v3zM17.500 20v-4c0-1-.5-2-1.500-3.500 5-2 9 0 9 4.500v3z" />
          </svg>
          <span className="mb-1 text-[12px]">26</span>
        </Tool>
        <Up label="Katılımcı seçenekleri" />
        <Tool label="Sohbet" className="ml-6 w-[52px]">
          <svg viewBox="0 0 22 20" className="h-5 w-[22px]" fill="#a9a9a7"><path d="M4 0h13c3 0 4 1 4 4v6c0 3-1 4-4 4h-6l-5 5v-5H4c-3 0-4-1-4-4V4c0-3 1-4 4-4z" /></svg>
        </Tool>
        <Up label="Sohbet seçenekleri" />
        <Tool label="Ekran Paylaşımı" green className="ml-2 w-[94px]">
          <span className="flex h-[18px] w-6 items-center justify-center rounded bg-[#22d167]">
            <svg viewBox="0 0 12 12" className="h-3 w-3" fill="none" stroke="#111" strokeWidth="2.200"><path d="M6 12V2M2 5.500 6 1.500l4 4" /></svg>
          </span>
        </Tool>
        <Tool label="Kaydet" className="w-[84px]">
          <svg viewBox="0 0 20 20" className="h-5 w-5" fill="#a9a9a7"><circle cx="10" cy="10" r="9" fill="none" stroke="#a9a9a7" strokeWidth="1.500" /><circle cx="10" cy="10" r="6.500" /></svg>
        </Tool>
        <Tool label="Parmak Kaldır" className="w-[86px]">
          <svg viewBox="0 0 18 20" className="h-5 w-[18px]" fill="none" stroke="#a9a9a7" strokeWidth="2.200" strokeLinecap="round">
            <path d="M3.500 5v8M6.500 2.500v9M9.500 1.500v10M12.500 3.500v9M16.500 10l-3 5" />
            <path d="M3.500 11v2c0 7 8 6 10 2v-4z" fill="#a9a9a7" />
          </svg>
        </Tool>
        <Tool label="Uygulamalar" className="w-[84px]">
          <svg viewBox="0 0 18 18" className="h-[18px] w-[18px]" fill="none" stroke="#a9a9a7" strokeWidth="1.500">
            <path d="M1 7V5c0-3 1-4 4-4h3M17 11v2c0 3-1 4-4 4h-3M14 7v2M4 11V9" />
            <circle cx="14" cy="3.500" r="2.300" />
            <circle cx="3.500" cy="14" r="2.300" />
          </svg>
        </Tool>
        <Tool label="Beyaz Tahtalar" className="ml-1 w-[92px]">
          <svg viewBox="0 0 20 18" className="h-[18px] w-5" fill="none" stroke="#a9a9a7" strokeWidth="1.500">
            <path d="M7 15H4c-2 0-3-1-3-3V4c0-2 1-3 3-3h12c2 0 3 1 3 3v8" />
            <rect x="9.500" y="13.500" width="9" height="3" rx="1.500" fill="#a9a9a7" />
          </svg>
        </Tool>
      </div>
      <button className="mr-3 h-[27px] w-[61px] rounded-lg bg-[#b0200e] text-[12px] font-bold text-[#f6e9e6]">Ayrıl</button>
    </div>
  );
}

/* ---------- chat ---------- */

const messages = [
  { from: "1030520941 Ulaş Güney ...", gap: "ml-auto", time: "17:22", text: "merhaba hocam", av: "1U", color: "bg-[#34435a]", bubble: "bg-[#eaeaea]" },
  { from: "1030521129 Muhammed ...", gap: "ml-auto", time: "17:32", text: "evet", av: "1M", color: "bg-[#d6a007]", bubble: "bg-[#eaeaea]" },
  { from: "Siz", gap: "", time: "17:32", text: "evet", av: "1E", color: "bg-[#d6a007]", bubble: "bg-[#dfe7f5]" },
  { from: "1030521025 Ahmet Kaan ...", gap: "ml-auto", time: "17:32", text: "evet", av: "1A", color: "bg-[#b03311]", bubble: "bg-[#eaeaea]" },
];

function Smiley({ plus = false }: { plus?: boolean }) {
  return (
    <svg viewBox="0 0 16 16" className="h-4 w-4" fill="none" stroke="currentColor" strokeWidth="1.100">
      <path d={plus ? "M10.500 2.300A6.200 6.200 0 1 0 13.500 6" : "M8 1.800a6.200 6.200 0 1 1 0 12.400A6.200 6.200 0 1 1 8 1.800"} />
      <path d="M5 9.500c1 3 5 3 6 0zM5.500 6v1.500M10.500 6v1.500" />
      {plus && <path d="M13.500 0v5M11 2.500h5" />}
    </svg>
  );
}

function Chat() {
  return (
    <aside className="relative flex w-80 shrink-0 flex-col bg-[#f9f9f7] text-[#6f6f7a]">
      <div className="grid h-[46px] grid-cols-[48px_1fr_48px] items-center">
        <button aria-label="Daralt" className="flex justify-center"><ChevronDown size={13} strokeWidth={2} /></button>
        <h2 className="text-center text-[13px] font-bold text-[#1f1f28]">Toplantı sohbeti</h2>
      </div>
      <div className="mt-[7px] flex flex-1 flex-col pr-3 pl-[13px]">
        {messages.map((m, i) => (
          <div key={i} className="flex h-[65px] flex-col">
            <div className="flex h-[18px] items-center gap-1 pl-[37px] text-[12px] whitespace-nowrap text-[#84848c]">
              <span>{m.from}</span>
              <span className={m.gap}>alıcı</span>
              <a href="#herkes" className="text-[#1f5fc4]">Herkes</a>
              <span className="text-[11px]">{m.time}</span>
            </div>
            <div className="flex items-start gap-[7px]">
              <span className={"mt-px flex h-6 w-6 items-center justify-center rounded-lg text-[14px] text-white " + m.color}>{m.av}</span>
              <p className={"rounded-xl px-[11px] py-2 text-[14px] leading-[21px] text-[#17171f] " + m.bubble}>{m.text}</p>
            </div>
          </div>
        ))}
        <div className="-mt-0.5 ml-[38px] flex h-4 items-center gap-2">
          <button aria-label="Yanıtla">
            <svg viewBox="0 0 16 16" className="h-4 w-4" fill="none" stroke="currentColor" strokeWidth="1.100"><path d="M10 3H4C2 3 1 4 1 6v4c0 2 1 3 3 3v2.500L7 13h4c2 0 3-1 3-3V7M13 1v5M10.500 3.500h5" /></svg>
          </button>
          <button aria-label="Tepki ver"><Smiley plus /></button>
          <button aria-label="Diğer" className="pb-2 text-[16px] leading-none">...</button>
        </div>
        <svg viewBox="0 0 12 19" className="absolute top-[715px] left-[240px] h-[19px] w-3" fill="#fff" stroke="#111">
          <path d="M.7 1v14.500l3.500-3.200 2.300 5.500 2.200-1-2.300-5.200h4.500z" />
        </svg>
      </div>
      <button className="flex h-6 items-center justify-center gap-1.5 bg-[#efefee] pb-0.5 text-[11px] text-[#77777f]">
        <svg viewBox="0 0 14 14" className="h-3.5 w-3.5" fill="none" stroke="#6f6f7a">
          <circle cx="6" cy="4" r="2.800" />
          <path d="M1 13c-.5-4 2-5 5-5M1 13h6" />
          <path d="M11 7 7.500 8v3c0 2 3.500 3 3.500 3s3-1 3-3V8z" fill="#1c63d8" stroke="none" />
        </svg>
        Mesajlarınızı kimler görebilir?
      </button>
      <div className="flex h-[120px] flex-col pt-[13px] pl-[11px]">
        <div className="flex items-center gap-2 text-[12px] text-[#3c3c46]">
          <label htmlFor="to">Alıcı:</label>
          <span className="relative flex h-[23px] w-[62px]">
            <select id="to" className="w-full appearance-none rounded-md bg-[#1663ea] pl-[7px] text-[11px] text-white"><option>Herkes</option></select>
            <ChevronDown size={10} strokeWidth={3} className="pointer-events-none absolute top-[8px] right-[6px] text-white" />
          </span>
        </div>
        <div className="relative mt-1 h-[50px]">
          <textarea aria-label="Mesaj" placeholder="Mesajı buraya yazın..." className="h-full w-full resize-none bg-transparent pl-1.5 text-[13px] leading-[22px] placeholder:text-[#7b7b84]" />
          <span className="absolute top-[3px] left-[5px] h-4 w-px bg-black" />
        </div>
        <div className="flex items-center gap-2 text-[#6f6f7a]">
          <button aria-label="Biçim"><svg viewBox="0 0 16 16" className="h-4 w-4" fill="none" stroke="currentColor" strokeWidth="1.100"><path d="M2 2h7M5.500 2v8M13 5l1.500 1.500L8 13l-2 .5.500-2z" /></svg></button>
          <button aria-label="Ekran görüntüsü"><svg viewBox="0 0 16 16" className="h-4 w-4" fill="none" stroke="currentColor" strokeWidth="1.100"><path d="M8.500 13H5c-2 0-3-1-3-3V5c0-2 1-3 3-3h5c2 0 3 1 3 3v4M13 10.500v5M10.500 13h5" /></svg></button>
          <button aria-label="Dosya"><svg viewBox="0 0 16 16" className="h-4 w-4" fill="none" stroke="currentColor" strokeWidth="1.100"><path d="M5 1.500h4.500L13.500 6v6.500c0 1-1 2-2 2H5c-1 0-2-1-2-2v-9c0-1 1-2 2-2zM9.500 1.500V6h4" /></svg></button>
          <button aria-label="Emoji"><Smiley /></button>
          <button aria-label="Diğer" className="pb-2 text-[16px] leading-none">...</button>
          <button aria-label="Gönder" className="mr-[14px] ml-auto flex h-6 w-6 items-center justify-center rounded-md bg-[#e9e9e8]">
            <svg viewBox="0 0 12 12" className="h-3 w-3" fill="#77777f"><path d="M0 1h12L6.500 12 6 6z" /></svg>
          </button>
        </div>
      </div>
    </aside>
  );
}

/* ---------- taskbar ---------- */

const taskIcons: { name: string; icon: React.ReactNode }[] = [
  { name: "Görev görünümü", icon: <svg viewBox="0 0 24 24" className="h-6 w-6"><path d="M6 2h18v16H6z" fill="#ecebe9" /><path d="M0 8h18v16H0z" fill="#6e6d6b" fillOpacity=".9" /></svg> },
  {
    name: "Edge",
    icon: (
      <svg viewBox="0 0 24 24" className="h-6 w-6">
        <defs><linearGradient id="eg" x1="0" x2="1"><stop offset="0" stopColor="#1a8fe0" /><stop offset=".6" stopColor="#2fc3c9" /><stop offset="1" stopColor="#62d94c" /></linearGradient></defs>
        <path d="M1 11C2 4 7 0 12.500 0 19 0 24 5 24 10c0 4-3 6-6 6-2 0-4-.5-4-2s1-1.500 1-4c0-2-2-4-5-4-4 0-8 2-9 5z" fill="url(#eg)" />
        <path d="M10 6C5 6 0 9 0 13c0 6 5 11 11 11-5-2-6-9-3-13 1-2 3-3 5-3-1-1-2-2-3-2z" fill="#1b7cd6" />
        <path d="M9 12c-1 6 4 9 8 9 2 0 4-1 5-2-2 3-6 5-10 5-5-1-7-7-3-12z" fill="#0f4f9e" />
      </svg>
    ),
  },
  { name: "Dosya Gezgini", icon: <svg viewBox="0 0 24 24" className="h-6 w-6"><path d="M0 2h9l2 3H0z" fill="#c9900d" /><path d="M0 4h24v18H0z" fill="#f0c93a" /><path d="M4 23v-5c0-2 1-3 3-3h10c2 0 3 1 3 3v5h-4v-3H8v3z" fill="#1f74cf" /></svg> },
  { name: "Store", icon: <svg viewBox="0 0 24 24" className="h-6 w-6"><path d="M1 6h22v15c0 1-1 2-2 2H3c-1 0-2-1-2-2z" fill="#f1f1f0" /><path d="M7 6V3c0-1 1-2 2-2h6c1 0 2 1 2 2v3" fill="none" stroke="#2c9be0" strokeWidth="1.800" /><path d="M7 10h4v4H7z" fill="#e8532a" /><path d="M13 10h4v4h-4z" fill="#7bb52c" /><path d="M7 15h4v4H7z" fill="#2b9fe8" /><path d="M13 15h4v4h-4z" fill="#f2b51d" /></svg> },
  {
    name: "Prime Video",
    icon: (
      <span className="flex h-6 w-6 flex-col items-center bg-[#1e83e8] pt-px text-[7px] leading-[9px] font-bold text-[#10223a]">
        <span>prime</span>
        <span>video</span>
        <svg viewBox="0 0 16 4" className="h-1 w-4" fill="none" stroke="#10223a" strokeWidth="1.300"><path d="M0 0c4 4 12 4 16 0" /></svg>
      </span>
    ),
  },
  { name: "Telegram", icon: <span className="flex h-[21px] w-[21px] items-center justify-center rounded-full bg-[#2d9bd8] text-white"><FaTelegramPlane size={12} /></span> },
  { name: "VS Code", icon: <svg viewBox="0 0 24 24" className="h-6 w-6"><path d="M17 0 6 10 2 7 0 8v8l2 1 15-13z" fill="#1b77bd" /><path d="m17 24-11-10-4 3-2-1V8l2-1 15 13z" fill="#2489ca" /><path d="M17 0l7 3v18l-7 3z" fill="#32a6ee" /><path d="m2 9 3 3-3 3z" fill="#1c1c1b" /></svg> },
  { name: "Zoom", icon: <span className="flex h-6 w-6 items-center justify-center rounded-[9px] bg-[#1c56f3] text-[7px] leading-none font-bold text-white">zoom</span> },
  { name: "Steam", icon: <span className="flex h-[22px] w-[22px] items-center justify-center rounded-full bg-linear-to-b from-[#0d1a33] to-[#1a6aa6] text-white"><FaSteamSymbol size={20} /></span> },
  { name: "Discord", icon: <span className="flex h-6 w-6 items-center justify-center rounded-full bg-[#6259e8] text-white"><FaDiscord size={15} /></span> },
  { name: "Chrome", icon: <svg viewBox="0 0 24 24" className="h-6 w-6"><circle cx="12" cy="12" r="12" fill="#e8c11c" /><path d="M12 12 1.600 6A12 12 0 0 1 22.400 6z" fill="#d93a25" /><path d="M12 12 1.600 6A12 12 0 0 0 12 24l5-9z" fill="#2c9a48" /><path d="M12 6h10.400A12 12 0 0 1 12 24l5-9z" fill="#e8c11c" /><circle cx="12" cy="12" r="5.800" fill="#f4f4f4" /><circle cx="12" cy="12" r="4.500" fill="#2f76e8" /></svg> },
];

function Taskbar() {
  return (
    <footer className="grid h-12 grid-cols-[1fr_auto_1fr] items-center bg-[linear-gradient(90deg,#22260f_0px,#1b2612_90px,#172421_200px,#11282a_290px,#142625_440px,#1c1e1c_560px,#1c1c1a_700px)] text-white">
      <span />
      <div className="flex items-center">
        <button aria-label="Başlat" className="flex w-11 justify-center">
          <span className="grid h-6 w-6 grid-cols-2 gap-px">
            {[0, 1, 2, 3].map((n) => <span key={n} className="bg-linear-to-br from-[#7fdcff] to-[#2f9cf2]" />)}
          </span>
        </button>
        <button className="mx-1 flex h-8 w-[100px] items-center justify-center gap-1 rounded-full border border-[#333331] bg-[#2a2a28] text-[12px] font-semibold">
          <Search size={15} strokeWidth={2.200} className="-scale-x-100" />
          Ara
        </button>
        {taskIcons.map((t) => (
          <button
            key={t.name}
            aria-label={t.name}
            className={"mx-0.5 flex h-10 w-10 flex-col items-center justify-center rounded " + (t.name === "Zoom" ? "relative border border-[#343432] bg-[#292927]" : "")}
          >
            {t.icon}
            {t.name === "Zoom" && <span className="absolute bottom-0 h-[3px] w-4 rounded-full bg-[#d98572]" />}
          </button>
        ))}
      </div>
      <div className="flex items-center justify-end pr-5">
        <ChevronUp size={16} strokeWidth={1.500} className="mr-3" />
        <Wifi size={17} strokeWidth={1.800} className="mr-1.5" />
        <svg viewBox="0 0 16 16" className="mr-2 h-4 w-4" fill="none" stroke="#fff" strokeWidth="1.200"><path d="M1 6h2.500L7 2.500v11L3.500 10H1zM9 5.500c1.500 1.500 1.500 3.500 0 5" /><path d="M11 3.500c3 3 3 6 0 9M13 2c4 4 4 8 0 12" stroke="#666" /></svg>
        <svg viewBox="0 0 18 16" className="mr-3.5 h-4 w-[18px]" fill="none" stroke="#fff" strokeWidth="1.400"><path d="M8 4h6v9H5V9M16 7v3M3.500 6v8" /><path d="M1.500 2v4h4V2M2.500 0v2M4.500 0v2" fill="#fff" /></svg>
        <div className="text-right text-[11px] leading-4"><div>17:33</div><div>19.04.2023</div></div>
        <span className="ml-3 flex h-4 w-4 items-center justify-center rounded-full bg-[#e27a55] text-[11px] text-black">1</span>
      </div>
    </footer>
  );
}

export default function App() {
  return (
    <div className={"relative flex min-h-screen flex-col overflow-hidden bg-[#131311] " + UI}>
      <header className="relative flex h-[23px] items-center bg-[#f9f9f7] text-[12px] text-[#333]">
        <span className="ml-0.5 flex h-4 w-4 items-center justify-center rounded-[5px] bg-[#1c56f3] text-[5px] font-bold text-white">zoom</span>
        <span className="ml-[5px]">Zoom Toplantı</span>
        <div className="absolute top-0 left-[750px] flex h-[22px] overflow-hidden rounded-b text-[12px] font-bold">
          <span className="flex w-[252px] items-center justify-center bg-[#1fd167] text-[#0e5b2e]">Mete Çelik ekranını görüntülüyorsunuz</span>
          <button className="flex w-[168px] items-center justify-between bg-[#1d1d1d] pr-2 pl-4 text-[11px] whitespace-nowrap text-[#ededed]">
            Seçenekleri Görüntüle <ChevronDown size={10} strokeWidth={3} />
          </button>
        </div>
        <div className="ml-auto flex items-center text-black">
          <button aria-label="Küçült" className="mr-9 h-px w-2.5 bg-black" />
          <button aria-label="Geri yükle" className="mr-[34px]">
            <svg viewBox="0 0 11 11" className="h-[11px] w-[11px]" fill="none" stroke="#111"><rect x=".5" y="2.500" width="8" height="8" rx="1.500" /><path d="M3 .5h5c1.500 0 2.500 1 2.500 2.500v5" /></svg>
          </button>
          <button aria-label="Kapat" className="mr-5">
            <svg viewBox="0 0 11 11" className="h-[11px] w-[11px]" stroke="#111"><path d="m.5.5 10 10M10.500.5l-10 10" /></svg>
          </button>
        </div>
      </header>
      <div className="flex flex-1">
        <main className="relative flex min-w-0 flex-1 flex-col">
          <Gallery />
          <span className="absolute top-[122px] left-[8px] flex h-6 w-6 items-center justify-center rounded bg-[#1c1c1b]">
            <svg viewBox="0 0 14 14" className="h-3.5 w-3.5"><path d="m7 0 6 2v5c0 4-3 6-6 7-3-1-6-3-6-7V2z" fill="#2ed573" /><path d="m4 7 2 2 4-4" fill="none" stroke="#111" strokeWidth="1.400" /></svg>
          </span>
          <div className="mr-[127px] ml-[126px] flex flex-1 border-[5px] border-[#7cb82f]">
            <AdobeReader />
            <PowerPoint />
          </div>
          <Toolbar />
        </main>
        <Chat />
      </div>
      <Taskbar />
      <div className="absolute top-[12px] left-[11px] text-[15px] leading-6 font-bold whitespace-pre text-[#4f6ff5] [text-shadow:1px_1px_1px_#000,-1px_-1px_1px_#000,1px_-1px_1px_#000,-1px_1px_1px_#000,0_2px_1px_#000]">
        5  Sn. Geriye (anahtar kareyle) / 00:11:19(11%)
      </div>
    </div>
  );
}
